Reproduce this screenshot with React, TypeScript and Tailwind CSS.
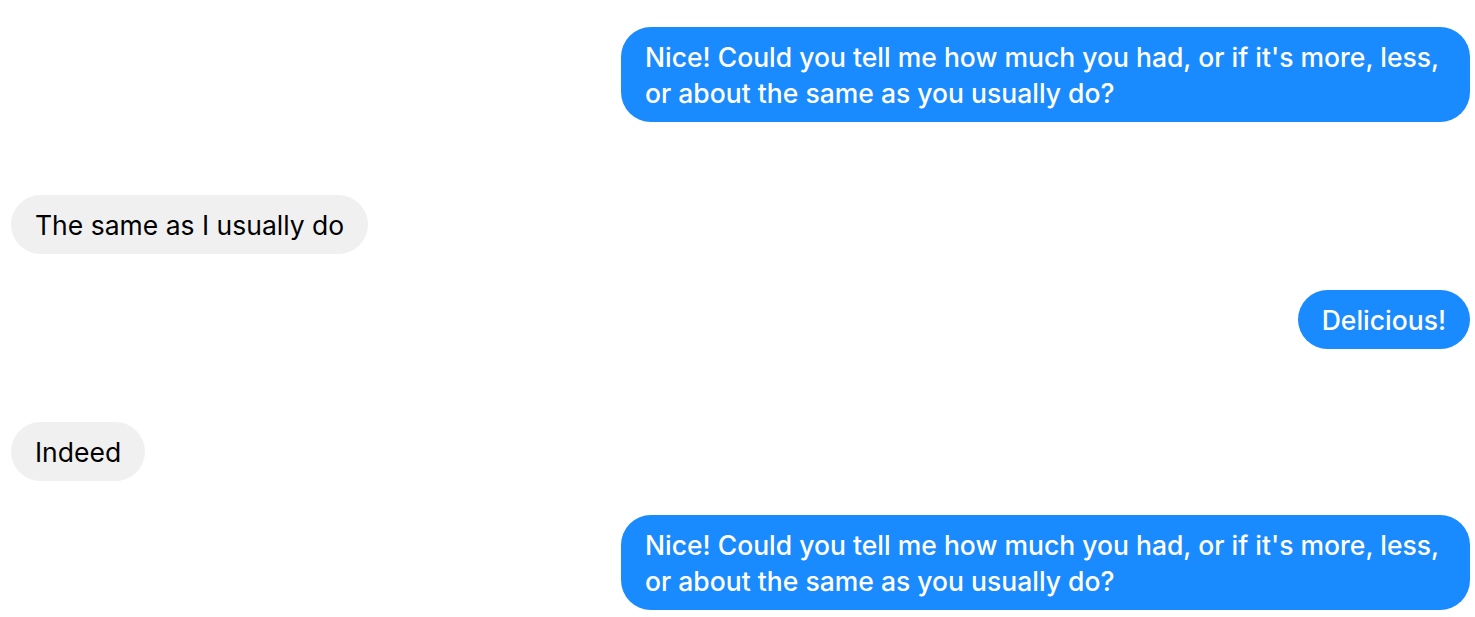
const messages = [
  { mine: true, text: "Nice! Could you tell me how much you had, or if it's more, less, or about the same as you usually do?", mt: 'mt-[27px]' },
  { mine: false, text: 'The same as I usually do', mt: 'mt-[73px]' },
  { mine: true, text: 'Delicious!', mt: 'mt-[36px]' },
  { mine: false, text: 'Indeed', mt: 'mt-[73px]' },
  { mine: true, text: "Nice! Could you tell me how much you had, or if it's more, less, or about the same as you usually do?", mt: 'mt-[34px]' },
]

const App = () => {
  return (
    <div className="min-h-screen bg-white pl-[11px] pr-[5px] font-['Inter','Liberation_Sans',sans-serif] text-[26.5px] leading-[36px]">
      <div className="flex flex-col">
        {messages.map((m, i) => (
          <div key={i} className={`flex ${m.mt} ${m.mine ? 'justify-end' : 'justify-start'}`}>
            {m.mine ? (
              <div className="max-w-[849px] rounded-[30px] bg-[#1a8aff] px-6 py-[11.5px] font-medium text-white">
                {m.text}
              </div>
            ) : (
              <div className="rounded-[30px] bg-[#f0f0f0] px-6 py-[11.5px] text-black">{m.text}</div>
            )}
          </div>
        ))}
      </div>
    </div>
  )
}

export default App
